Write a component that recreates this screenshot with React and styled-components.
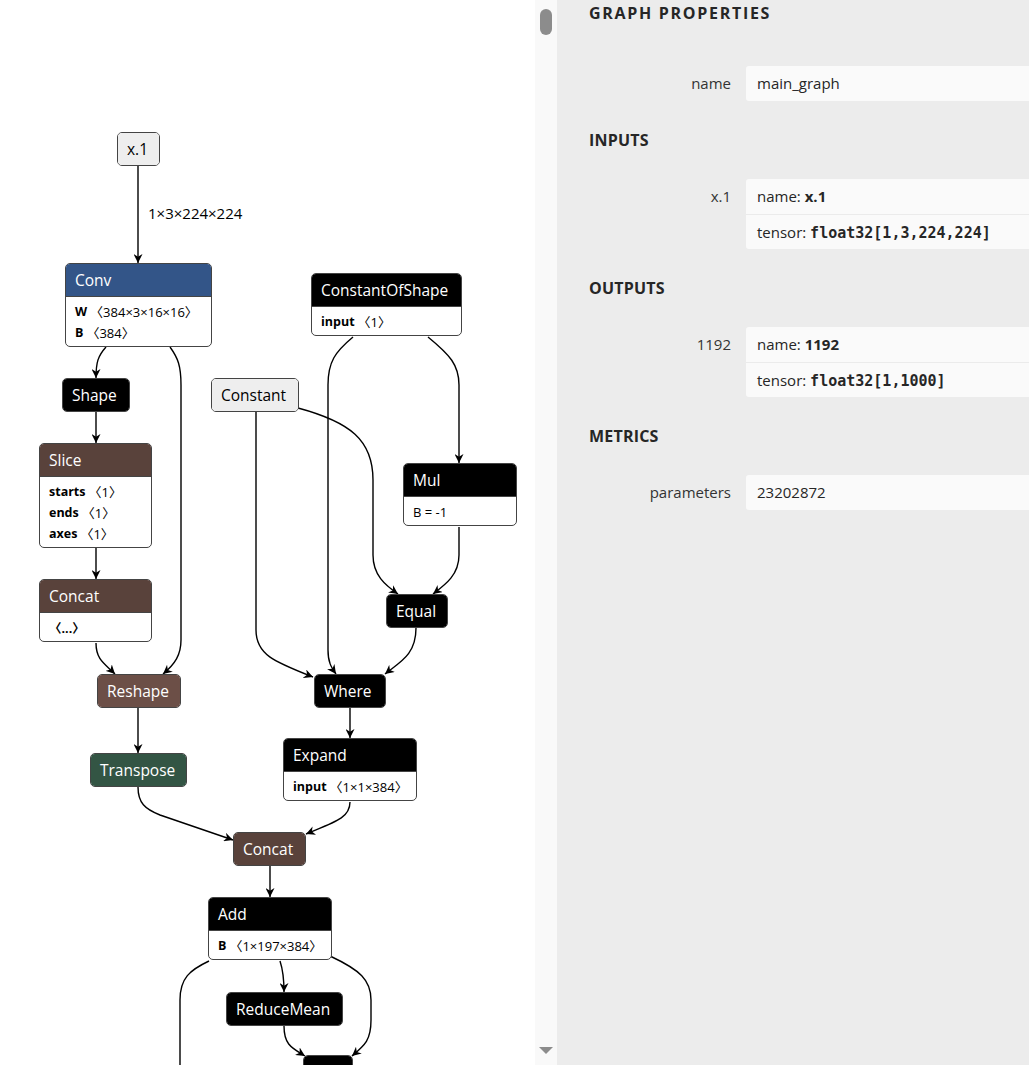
import React from 'react'
import styled, { createGlobalStyle } from 'styled-components'

const GlobalStyle = createGlobalStyle`
  html, body { margin: 0; padding: 0; }
  body {
    font-family: "Open Sans", "Noto Sans CJK JP", sans-serif;
    background: #fff;
    overflow: hidden;
  }
`

const nodes = [
  { id: 'x1', x: 117, y: 132, w: 43, title: 'x.1', light: true },
  { id: 'conv', x: 65, y: 263, w: 147, title: 'Conv', color: '#335588', attrs: [['W', '〈384×3×16×16〉'], ['B', '〈384〉']] },
  { id: 'shape', x: 62, y: 378, w: 68, title: 'Shape' },
  { id: 'slice', x: 39, y: 443, w: 113, title: 'Slice', color: '#59423b', attrs: [['starts', '〈1〉'], ['ends', '〈1〉'], ['axes', '〈1〉']] },
  { id: 'concat1', x: 39, y: 579, w: 113, title: 'Concat', color: '#59423b', attrs: [['', '〈...〉', true]] },
  { id: 'reshape', x: 97, y: 674, w: 84, title: 'Reshape', color: '#6c4f47' },
  { id: 'transpose', x: 90, y: 753, w: 97, title: 'Transpose', color: '#335544' },
  { id: 'constant', x: 211, y: 378, w: 88, title: 'Constant', light: true },
  { id: 'cos', x: 311, y: 273, w: 151, title: 'ConstantOfShape', attrs: [['input', '〈1〉']] },
  { id: 'mul', x: 403, y: 463, w: 114, title: 'Mul', attrs: [['', 'B = -1']] },
  { id: 'equal', x: 386, y: 594, w: 62, title: 'Equal' },
  { id: 'where', x: 314, y: 674, w: 72, title: 'Where' },
  { id: 'expand', x: 283, y: 738, w: 134, title: 'Expand', attrs: [['input', '〈1×1×384〉']] },
  { id: 'concat2', x: 233, y: 832, w: 73, title: 'Concat', color: '#59423b' },
  { id: 'add', x: 208, y: 897, w: 124, title: 'Add', attrs: [['B', '〈1×197×384〉']] },
  { id: 'reducemean', x: 226, y: 992, w: 117, title: 'ReduceMean' },
  { id: 'next', x: 303, y: 1055, w: 50, title: '' },
]

// edge paths between the node boxes above
const edges = [
  'M138 166 L138 263',
  'M106 347 C98 356, 96 362, 96 378',
  'M170 347 C178 358, 181 366, 181 385 L181 640 C181 655, 175 664, 163 674',
  'M96 412 L96 443',
  'M96 548 L96 579',
  'M96 643 C96 660, 105 664, 115 674',
  'M138 708 L138 753',
  'M138 787 C138 803, 145 809, 160 815 L233 840',
  'M350 802 C350 818, 335 822, 306 834',
  'M270 866 L270 897',
  'M280 961 C283 970, 284 978, 284 992',
  'M209 961 C190 970, 180 978, 180 1000 L180 1070',
  'M330 956 C360 970, 371 980, 371 1000 L371 1020 C371 1040, 365 1045, 352 1056',
  'M284 1026 C284 1045, 292 1048, 305 1056',
  'M353 337 C335 352, 328 362, 328 385 L328 650 C328 662, 331 667, 336 674',
  'M428 337 C450 355, 459 365, 459 385 L459 463',
  'M256 412 L256 630 C256 655, 275 662, 313 677',
  'M298 408 C350 422, 373 440, 373 480 L373 555 C373 575, 385 585, 398 594',
  'M459 527 L459 555 C459 575, 445 585, 433 594',
  'M416 628 C416 655, 400 662, 385 674',
  'M350 708 L350 738',
]

const sections = [
  { title: 'GRAPH PROPERTIES', rows: [{ label: 'name', lines: [['', 'main_graph']] }] },
  { title: 'INPUTS', rows: [{ label: 'x.1', lines: [['name: ', 'x.1'], ['tensor: ', 'float32[1,3,224,224]', true]] }] },
  { title: 'OUTPUTS', rows: [{ label: '1192', lines: [['name: ', '1192'], ['tensor: ', 'float32[1,1000]', true]] }] },
  { title: 'METRICS', rows: [{ label: 'parameters', lines: [['', '23202872']] }] },
]

const Page = styled.div`
  display: flex;
  width: 1029px;
  height: 1065px;
  overflow: hidden;
`

const Canvas = styled.div`
  position: relative;
  flex: none;
  width: 535px;
  height: 100%;
  background: #fff;
  overflow: hidden;
`

const EdgeLayer = styled.svg`
  position: absolute;
  left: 0;
  top: 0;
  width: 535px;
  height: 1065px;
`

const EdgeLabel = styled.text`
  font-family: "Open Sans", sans-serif;
  font-size: 15px;
  fill: #000;
`

const NodeBox = styled.div`
  position: absolute;
  left: ${p => p.$x}px;
  top: ${p => p.$y}px;
  width: ${p => p.$w}px;
  box-sizing: border-box;
  display: flex;
  flex-direction: column;
  border: 1px solid #444;
  border-radius: 5px;
  overflow: hidden;
  background: #fff;
`

const NodeHeader = styled.div`
  height: 32px;
  display: flex;
  align-items: center;
  padding: 0 9px;
  background: ${p => (p.$light ? '#eeeeee' : p.$color || '#000')};
  color: ${p => (p.$light ? '#000' : '#fff')};
  font-size: 15.5px;
  white-space: nowrap;
`

const NodeBody = styled.div`
  border-top: 1px solid #444;
  padding: 4px 0 3px 9px;
  display: flex;
  flex-direction: column;
`

const Attr = styled.div`
  height: 21px;
  display: flex;
  align-items: center;
  font-size: 13px;
  white-space: nowrap;

  b {
    font-weight: 700;
    font-size: 12.5px;
    margin-right: 3px;
  }
`

const ScrollTrack = styled.div`
  flex: none;
  width: 22px;
  background: #f9f9f9;
  display: flex;
  flex-direction: column;
  align-items: center;
  justify-content: space-between;
  padding: 9px 0 11px;
  box-sizing: border-box;
`

const Thumb = styled.div`
  width: 12px;
  height: 26px;
  border-radius: 6px;
  background: #8c8c8c;
`

const DownArrow = styled.div`
  width: 0;
  height: 0;
  border-left: 7px solid transparent;
  border-right: 7px solid transparent;
  border-top: 7px solid #8c8c8c;
`

const Sidebar = styled.aside`
  flex: 1;
  background: #ececec;
  padding: 3px 0 0 32px;
  color: #262626;
  overflow: hidden;
`

const Section = styled.section`
  & + & {
    margin-top: 29px;
  }
`

const Title = styled.div`
  font-size: 16px;
  font-weight: 700;
  line-height: 20px;
  letter-spacing: ${p => (p.$first ? '1.7px' : '0.2px')};
  margin-bottom: ${p => (p.$first ? '43px' : '29px')};
`

const PropRow = styled.div`
  display: flex;
  align-items: flex-start;
  gap: 15px;
`

const PropLabel = styled.div`
  flex: none;
  width: 142px;
  text-align: right;
  line-height: 35px;
  font-size: 15px;
  color: #333;
`

const ValueBox = styled.div`
  flex: 1;
  background: #fafafa;
  border-radius: 3px 0 0 3px;
  font-size: 15px;
`

const ValueLine = styled.div`
  height: 35px;
  line-height: 35px;
  padding-left: 11px;
  white-space: nowrap;

  & + & {
    border-top: 1px solid #ebebeb;
    height: 34px;
  }

  b {
    font-weight: 700;
  }

  code {
    font-family: "DejaVu Sans Mono", monospace;
    font-weight: 700;
    font-size: 15px;
  }
`

const GraphNode = ({ node }) => (
  <NodeBox $x={node.x} $y={node.y} $w={node.w}>
    <NodeHeader $color={node.color} $light={node.light}>{node.title}</NodeHeader>
    {node.attrs && (
      <NodeBody>
        {node.attrs.map(([name, value, boldValue], i) => (
          <Attr key={i}>
            {name && <b>{name}</b>}
            {boldValue ? <b>{value}</b> : value}
          </Attr>
        ))}
      </NodeBody>
    )}
  </NodeBox>
)

const App = () => {
  return (
    <Page>
      <GlobalStyle />
      <Canvas>
        <EdgeLayer viewBox="0 0 535 1065">
          <defs>
            <marker id="arrow" viewBox="0 0 10 10" refX="10" refY="5" markerWidth="9" markerHeight="9" markerUnits="userSpaceOnUse" orient="auto">
              <path d="M0 0 L10 5 L0 10 L3 5 z" fill="#000" />
            </marker>
          </defs>
          {edges.map((d, i) => (
            <path key={i} d={d} fill="none" stroke="#000" strokeWidth="1.4" markerEnd={d.endsWith('1070') ? undefined : 'url(#arrow)'} />
          ))}
          <EdgeLabel x="148" y="219">1×3×224×224</EdgeLabel>
        </EdgeLayer>
        {nodes.map(n => <GraphNode key={n.id} node={n} />)}
      </Canvas>
      <ScrollTrack>
        <Thumb />
        <DownArrow />
      </ScrollTrack>
      <Sidebar>
        {sections.map((s, i) => (
          <Section key={s.title}>
            <Title $first={i === 0}>{s.title}</Title>
            {s.rows.map(r => (
              <PropRow key={r.label}>
                <PropLabel>{r.label}</PropLabel>
                <ValueBox>
                  {r.lines.map(([prefix, value, mono], j) => (
                    <ValueLine key={j}>
                      {prefix}
                      {mono ? <code>{value}</code> : prefix ? <b>{value}</b> : value}
                    </ValueLine>
                  ))}
                </ValueBox>
              </PropRow>
            ))}
          </Section>
        ))}
      </Sidebar>
    </Page>
  )
}

export default App
